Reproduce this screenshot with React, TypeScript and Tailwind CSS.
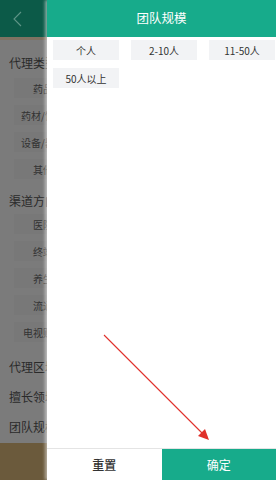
import React from "react";

const font = { fontFamily: '"Noto Sans CJK SC", "Noto Sans", sans-serif' };

const groupOne = ["药品", "药材/饮片", "设备/器械", "其他"];
const groupTwo = ["医院", "终端", "养生", "流通", "电视购物"];
const rows = ["代理区域", "擅长领域", "团队规模"];
const sizes = ["个人", "2-10人", "11-50人", "50人以上"];

const BackChip = ({ label }: { label: string }) => (
  <div className="ml-[14px] w-[58px] h-[20px] shrink-0 bg-[#787878] flex items-center justify-center text-[10px] text-[#333333] whitespace-nowrap">
    {label}
  </div>
);

const App = () => {
  return (
    <div className="w-[276px] h-[480px] flex overflow-hidden bg-white" style={font}>
      {/* page behind the drawer, dimmed */}
      <div className="w-[47px] shrink-0 flex flex-col overflow-hidden bg-[#7b7b7b]">
        <div className="h-[37px] shrink-0 bg-[#0c5a48] flex items-center pl-[13px]">
          <svg width="9" height="16" viewBox="0 0 9 16" fill="none">
            <polyline points="8,1 1,8 8,15" stroke="#5f9587" strokeWidth="1.1" />
          </svg>
        </div>
        <div className="h-[3px] shrink-0 bg-[#7e7262]" />
        <div className="flex-1 w-[150px] flex flex-col pt-[10px]">
          <div className="h-[26px] flex items-center pl-[9px] text-[12px] text-[#2a2a2a] whitespace-nowrap">代理类型</div>
          <div className="mt-[2px] flex flex-col gap-[7px]">
            {groupOne.map((g) => (
              <BackChip key={g} label={g} />
            ))}
          </div>
          <div className="mt-[11px] h-[22px] flex items-center pl-[9px] text-[12px] text-[#2a2a2a] whitespace-nowrap">渠道方向</div>
          <div className="mt-[2px] flex flex-col gap-[7px]">
            {groupTwo.map((g) => (
              <BackChip key={g} label={g} />
            ))}
          </div>
          <div className="mt-[10px] flex flex-col">
            {rows.map((r) => (
              <div key={r} className="h-[30px] flex items-center pl-[9px] text-[12px] text-[#2a2a2a] whitespace-nowrap">
                {r}
              </div>
            ))}
          </div>
        </div>
        <div className="h-[37px] shrink-0 bg-[#6b5a3c]" />
      </div>

      {/* drawer */}
      <div className="relative flex-1 flex flex-col bg-white shadow-[-2px_0_3px_rgba(255,255,255,0.5)]">
        <div className="h-[37px] shrink-0 bg-[#17ab8b] flex items-center justify-center text-white text-[12.5px]">
          团队规模
        </div>
        <div className="grid grid-cols-3 gap-x-[12px] gap-y-[8px] pl-[6px] pr-[1px] pt-[3px]">
          {sizes.map((s) => (
            <div
              key={s}
              className="h-[20px] bg-[#f2f3f5] flex items-center justify-center text-[10px] text-[#333333]"
            >
              {s}
            </div>
          ))}
        </div>
        <div className="flex-1" />
        <div className="h-[32px] shrink-0 flex border-t border-[#e4e4e4]">
          <button className="flex-1 flex items-center justify-center text-[12px] font-medium text-[#333333] bg-white">
            重置
          </button>
          <button className="flex-1 flex items-center justify-center text-[12px] text-white bg-[#17ab8b]">
            确定
          </button>
        </div>

        {/* red annotation arrow */}
        <svg className="absolute left-0 top-0 pointer-events-none" width="229" height="480" viewBox="0 0 229 480">
          <line x1="57" y1="335" x2="157" y2="435" stroke="#e0302a" strokeWidth="1.1" />
          <polygon points="162,440 151,436 158,429" fill="#e0302a" />
        </svg>
      </div>
    </div>
  );
};

export default App;
